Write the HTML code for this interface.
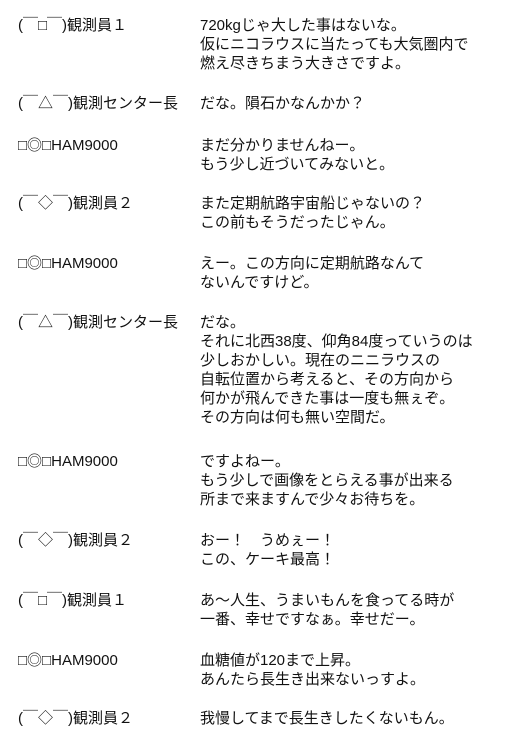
<!DOCTYPE html>
<html><head><meta charset="utf-8"><style>
body{margin:0;background:#fff;width:531px;height:751px;overflow:hidden;font-family:"Liberation Sans","Noto Sans CJK JP","IPAGothic",sans-serif;font-size:15px;color:#111}
.b{position:absolute;left:0;width:531px}
.n{position:absolute;left:18px;top:0;white-space:nowrap;line-height:19px}
.t{position:absolute;left:200px;top:0;white-space:nowrap;line-height:19px}
</style></head><body>
<div class="b" style="top:16px"><div class="n">(￣□￣)観測員１</div><div class="t">720kgじゃ大した事はないな。<br>仮にニコラウスに当たっても大気圏内で<br>燃え尽きちまう大きさですよ。</div></div>
<div class="b" style="top:94px"><div class="n">(￣△￣)観測センター長</div><div class="t">だな。隕石かなんかか？</div></div>
<div class="b" style="top:136px"><div class="n">□◎□HAM9000</div><div class="t">まだ分かりませんねー。<br>もう少し近づいてみないと。</div></div>
<div class="b" style="top:194px"><div class="n">(￣◇￣)観測員２</div><div class="t">また定期航路宇宙船じゃないの？<br>この前もそうだったじゃん。</div></div>
<div class="b" style="top:254px"><div class="n">□◎□HAM9000</div><div class="t">えー。この方向に定期航路なんて<br>ないんですけど。</div></div>
<div class="b" style="top:313px"><div class="n">(￣△￣)観測センター長</div><div class="t">だな。<br>それに北西38度、仰角84度っていうのは<br>少しおかしい。現在のニニラウスの<br>自転位置から考えると、その方向から<br>何かが飛んできた事は一度も無ぇぞ。<br>その方向は何も無い空間だ。</div></div>
<div class="b" style="top:452px"><div class="n">□◎□HAM9000</div><div class="t">ですよねー。<br>もう少しで画像をとらえる事が出来る<br>所まで来ますんで少々お待ちを。</div></div>
<div class="b" style="top:531px"><div class="n">(￣◇￣)観測員２</div><div class="t">おー！　うめぇー！<br>この、ケーキ最高！</div></div>
<div class="b" style="top:591px"><div class="n">(￣□￣)観測員１</div><div class="t">あ～人生、うまいもんを食ってる時が<br>一番、幸せですなぁ。幸せだー。</div></div>
<div class="b" style="top:651px"><div class="n">□◎□HAM9000</div><div class="t">血糖値が120まで上昇。<br>あんたら長生き出来ないっすよ。</div></div>
<div class="b" style="top:709px"><div class="n">(￣◇￣)観測員２</div><div class="t">我慢してまで長生きしたくないもん。</div></div>
</body></html>
